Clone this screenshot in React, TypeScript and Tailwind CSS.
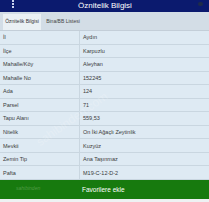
import React from "react";

const rows: [string, string][] = [
  ["İl", "Aydın"],
  ["İlçe", "Karpuzlu"],
  ["Mahalle/Köy", "Aleyhan"],
  ["Mahalle No", "152245"],
  ["Ada", "124"],
  ["Parsel", "71"],
  ["Tapu Alanı", "559,53"],
  ["Nitelik", "On İki Ağaçlı Zeytinlik"],
  ["Mevkii", "Kuzyüz"],
  ["Zemin Tip", "Ana Taşınmaz"],
  ["Pafta", "M19-C-12-D-2"],
];

export default function App() {
  return (
    <div
      className="w-[209px] h-[202px] flex flex-col overflow-hidden bg-[#e9eef2] relative"
      style={{ fontFamily: '"Liberation Sans", Arial, sans-serif' }}
    >
      <div className="h-[12px] bg-[#0b1a6e] flex items-center relative shrink-0">
        <div className="absolute left-[12px] top-[0px] flex flex-col gap-[1px]">
          <span className="w-[2px] h-[2px] bg-[#c9d2ee] block" />
          <span className="w-[2px] h-[2px] bg-[#c9d2ee] block" />
          <span className="w-[2px] h-[2px] bg-[#c9d2ee] block" />
        </div>
        <div className="w-full text-center text-white text-[8px] leading-[12px] pl-[1px]">Öznitelik Bilgisi</div>
        <div className="absolute right-[6px] top-[2px] w-[5px] h-[4px] rounded-full bg-[#1d2b4a]" />
      </div>
      <div className="h-[19px] bg-[#d3dde6] flex items-end px-[3px] gap-[4px] shrink-0 border-b border-[#c3ced8]">
        <div className="h-[16px] w-[38px] bg-[#eaf0f4] flex items-center justify-center text-[5px] text-[#333]">Öznitelik Bilgisi</div>
        <div className="h-[16px] w-[36px] flex items-center justify-center text-[5px] text-[#444]">Bina/BB Listesi</div>
      </div>
      <div className="h-[149px] flex flex-col bg-[#deeaf3] shrink-0">
        {rows.map(([k, v]) => (
          <div key={k} className="flex-1 flex border-b border-[#c9d6e0] text-[5.5px] text-[#3a3a3a]">
            <div className="w-[80px] border-r border-[#c9d6e0] pl-[3px] flex items-center">{k}</div>
            <div className="flex-1 pl-[3px] flex items-center">{v}</div>
          </div>
        ))}
      </div>
      <div className="h-[19px] bg-[#177a0e] flex items-center shrink-0 relative">
        <div className="absolute left-[16px] top-[5px] text-[5px] text-[#4f9a45] italic">sahibinden</div>
        <div className="pl-[82px] text-white text-[6.5px]">Favorilere ekle</div>
      </div>
      <div className="flex-1 bg-[#eef1f3]" />
      <div className="absolute left-[30px] top-[110px] -rotate-[35deg] text-[12px] text-white/20 pointer-events-none">sahibinden.com</div>
    </div>
  );
}
